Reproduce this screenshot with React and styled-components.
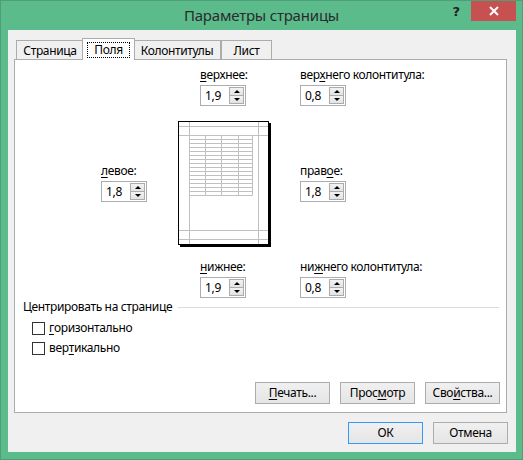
import React from 'react';
import styled, { createGlobalStyle } from 'styled-components';

const Global = createGlobalStyle`
  html, body { margin: 0; padding: 0; background: #5bbb8b; }
  body { font-family: "Segoe UI", "Noto Sans", sans-serif; font-size: 12px; letter-spacing: -0.35px; color: #000; }
  * { box-sizing: border-box; }
`;

const Window = styled.div`
  width: 523px;
  height: 460px;
  background: #5bbb8b;
  border: 1px solid #4c9f77;
  display: flex;
  flex-direction: column;
`;

const TitleBar = styled.div`
  height: 29px;
  display: flex;
  align-items: flex-start;
  padding: 0 6px;
`;

const TitleSpacer = styled.div`
  width: 75px;
  flex: none;
`;

const Title = styled.div`
  flex: 1;
  text-align: center;
  line-height: 29px;
  font-size: 15px;
  letter-spacing: -0.2px;
  color: #2b2b2b;
`;

const Controls = styled.div`
  display: flex;
  width: 75px;
  flex: none;
`;

const HelpButton = styled.div`
  width: 30px;
  height: 20px;
  display: flex;
  align-items: center;
  justify-content: center;
  font-family: "DejaVu Sans", sans-serif;
  font-weight: bold;
  font-size: 13px;
  color: #222;
`;

const CloseButton = styled.div`
  width: 45px;
  height: 20px;
  background: #c75050;
  display: flex;
  align-items: center;
  justify-content: center;
`;

const Client = styled.div`
  margin: 0 6px 0 7px;
  height: 422px;
  background: #f0f0f0;
  padding: 8px 9px 8px 6px;
  display: flex;
  flex-direction: column;
`;

const TabStrip = styled.div`
  height: 21px;
  display: flex;
  align-items: flex-end;
  padding-left: 2px;
`;

const Tab = styled.div`
  width: ${p => p.$w}px;
  height: ${p => (p.$active ? 22 : 19)}px;
  margin: ${p => (p.$active ? '0 -2px -1px' : '0')};
  border: 1px solid #acacac;
  border-bottom: none;
  background: ${p => (p.$active ? '#fff' : '#f0f0f0')};
  position: relative;
  z-index: ${p => (p.$active ? 1 : 0)};
  text-align: center;
  line-height: 17px;
  padding-top: ${p => (p.$active ? 0 : 1)}px;
  flex: none;
`;

const FocusRing = styled.div`
  margin: 3px 4px 0;
  height: 16px;
  border: 1px dotted #000;
  line-height: 14px;
  text-align: center;
`;

const Panel = styled.div`
  height: 354px;
  border: 1px solid #acacac;
  background: #fff;
  display: flex;
  flex-direction: column;
  padding-top: 8px;
`;

const MarginsGrid = styled.div`
  display: grid;
  grid-template-columns: 75px 24px 71px 29px 1fr;
  grid-template-rows: auto 128px auto;
  row-gap: 13px;
  padding-left: 86px;
`;

const Field = styled.div`
  grid-column: ${p => p.$col};
  grid-row: ${p => p.$row};
  align-self: ${p => (p.$center ? 'center' : 'start')};
  display: flex;
  flex-direction: column;
  align-items: flex-start;
`;

const FieldLabel = styled.div`
  line-height: 14px;
  margin-bottom: 3px;
  white-space: nowrap;
`;

const Key = styled.span`
  text-decoration: underline;
  text-underline-offset: 2px;
`;

const SpinBox = styled.div`
  width: 46px;
  height: 21px;
  border: 1px solid #abadb3;
  background: #fff;
  display: flex;
  align-items: stretch;
`;

const SpinValue = styled.div`
  flex: 1;
  padding-left: 4px;
  line-height: 19px;
`;

const Spinner = styled.div`
  width: 15px;
  margin: 1px 1px 1px 0;
  display: flex;
  flex-direction: column;
`;

const SpinButton = styled.div`
  flex: 1;
  border: 1px solid #acacac;
  margin-top: ${p => (p.$down ? '-1px' : '0')};
  background: linear-gradient(#f2f2f2, #e3e3e3);
  display: flex;
  align-items: center;
  justify-content: center;
`;

const Arrow = styled.div`
  width: 0;
  height: 0;
  border-left: 3px solid transparent;
  border-right: 3px solid transparent;
  ${p => (p.$down ? 'border-top: 3px solid #000;' : 'border-bottom: 3px solid #000;')}
`;

const PreviewCell = styled.div`
  grid-column: 2 / 4;
  grid-row: 2;
`;

const SectionHeading = styled.div`
  margin-top: 2px;
  padding: 0 7px 0 8px;
  display: flex;
  align-items: center;
  line-height: 14px;
`;

const HeadingRule = styled.div`
  flex: 1;
  height: 0;
  border-top: 1px solid #dcdcdc;
  margin-left: 6px;
`;

const CheckList = styled.div`
  margin-top: 4px;
  padding-left: 17px;
  display: flex;
  flex-direction: column;
`;

const CheckRow = styled.div`
  height: 20px;
  display: flex;
  align-items: center;
  line-height: 14px;
`;

const CheckBox = styled.div`
  width: 13px;
  height: 13px;
  border: 1px solid #333;
  background: #fff;
  margin-right: 4px;
  flex: none;
`;

const ButtonRow = styled.div`
  margin-top: auto;
  display: flex;
  justify-content: flex-end;
  gap: 10px;
  padding: ${p => (p.$inPanel ? '0 6px 8px 0' : '0')};
`;

const Button = styled.div`
  width: 75px;
  height: 22px;
  border: 1px solid ${p => (p.$default ? '#3399ff' : '#acacac')};
  background: linear-gradient(#f0f0f0, #e5e5e5);
  display: flex;
  align-items: center;
  justify-content: center;
  line-height: 14px;
`;

const FooterRow = styled(ButtonRow)`
  margin-top: 9px;
  margin-right: -1px;
`;

function Spin({ value }) {
  return (
    <SpinBox>
      <SpinValue>{value}</SpinValue>
      <Spinner>
        <SpinButton><Arrow /></SpinButton>
        <SpinButton $down><Arrow $down /></SpinButton>
      </Spinner>
    </SpinBox>
  );
}

function Lbl({ pre = '', k, post = '' }) {
  return (
    <>
      {pre}
      <Key>{k}</Key>
      {post}
    </>
  );
}

function PagePreview() {
  const rows = Array.from({ length: 16 }, (_, i) => 16.5 + 4 * i);
  const cols = [29.5, 45.5, 62.5, 76.5];
  const g = '#c0c0c0';
  return (
    <svg width="95" height="128" viewBox="0 0 95 128" style={{ display: 'block' }}>
      <rect x="4" y="4" width="91" height="124" fill="#000" />
      <rect x="2.5" y="2.5" width="90" height="123" fill="#fff" stroke="#000" />
      <line x1="13.5" y1="3" x2="13.5" y2="125" stroke={g} />
      <line x1="82.5" y1="3" x2="82.5" y2="125" stroke={g} />
      {[7.5, 16.5, 111.5, 120.5].map(y => (
        <line key={y} x1="3" y1={y} x2="92" y2={y} stroke={g} />
      ))}
      {cols.map(x => (
        <line key={x} x1={x} y1="16.5" x2={x} y2="76.5" stroke={g} />
      ))}
      {rows.map(y => (
        <line key={y} x1="13.5" y1={y} x2="76.5" y2={y} stroke={g} />
      ))}
    </svg>
  );
}

export default function App() {
  return (
    <>
      <Global />
      <Window>
        <TitleBar>
          <TitleSpacer />
          <Title>Параметры страницы</Title>
          <Controls>
            <HelpButton>?</HelpButton>
            <CloseButton>
              <svg width="10" height="10" viewBox="0 0 10 10">
                <path d="M1 1 L9 9 M9 1 L1 9" stroke="#fff" strokeWidth="2" />
              </svg>
            </CloseButton>
          </Controls>
        </TitleBar>
        <Client>
          <TabStrip>
            <Tab $w={68}>Страница</Tab>
            <Tab $w={53} $active><FocusRing>Поля</FocusRing></Tab>
            <Tab $w={88}>Колонтитулы</Tab>
            <Tab $w={51}>Лист</Tab>
          </TabStrip>
          <Panel>
            <MarginsGrid>
              <Field $col="3 / 5" $row={1}>
                <FieldLabel><Lbl k="в" post="ерхнее:" /></FieldLabel>
                <Spin value="1,9" />
              </Field>
              <Field $col={5} $row={1}>
                <FieldLabel><Lbl pre="вер" k="х" post="него колонтитула:" /></FieldLabel>
                <Spin value="0,8" />
              </Field>
              <Field $col={1} $row={2} $center>
                <FieldLabel><Lbl k="л" post="евое:" /></FieldLabel>
                <Spin value="1,8" />
              </Field>
              <PreviewCell><PagePreview /></PreviewCell>
              <Field $col={5} $row={2} $center>
                <FieldLabel><Lbl pre="прав" k="о" post="е:" /></FieldLabel>
                <Spin value="1,8" />
              </Field>
              <Field $col="3 / 5" $row={3}>
                <FieldLabel><Lbl k="н" post="ижнее:" /></FieldLabel>
                <Spin value="1,9" />
              </Field>
              <Field $col={5} $row={3}>
                <FieldLabel><Lbl pre="ни" k="ж" post="него колонтитула:" /></FieldLabel>
                <Spin value="0,8" />
              </Field>
            </MarginsGrid>
            <SectionHeading>
              Центрировать на странице
              <HeadingRule />
            </SectionHeading>
            <CheckList>
              <CheckRow><CheckBox /><Lbl k="г" post="оризонтально" /></CheckRow>
              <CheckRow><CheckBox /><Lbl pre="вер" k="т" post="икально" /></CheckRow>
            </CheckList>
            <ButtonRow $inPanel>
              <Button><Lbl k="П" post="ечать..." /></Button>
              <Button><Lbl pre="Прос" k="м" post="отр" /></Button>
              <Button><Lbl pre="Сво" k="й" post="ства..." /></Button>
            </ButtonRow>
          </Panel>
          <FooterRow>
            <Button $default>ОК</Button>
            <Button>Отмена</Button>
          </FooterRow>
        </Client>
      </Window>
    </>
  );
}
